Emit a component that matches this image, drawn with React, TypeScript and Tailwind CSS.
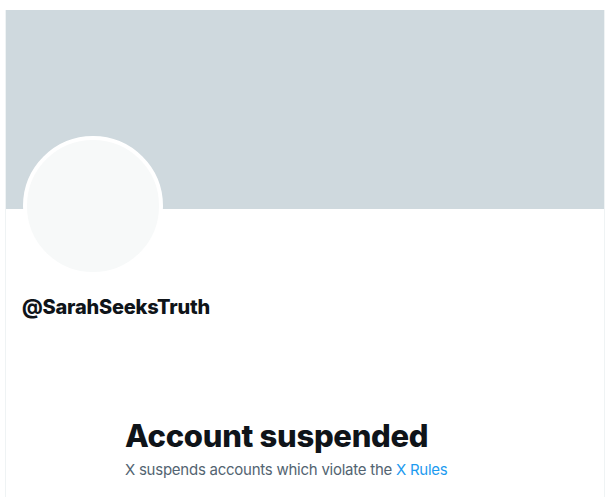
export default function App() {
  return (
    <div
      className="min-h-[497px] bg-white pt-[10px] pl-[5px]"
      style={{ fontFamily: 'Inter, "Noto Sans", "Liberation Sans", sans-serif' }}
    >
      <div className="w-[600px] min-h-[487px] border-x border-[#eff3f4]">
        {/* Banner */}
        <div className="h-[199px] bg-[#cfd9de]" />

        {/* Avatar + handle */}
        <div className="px-4">
          <div className="-mt-[73px] ml-[1px] w-[140px] h-[140px] rounded-full border-4 border-white bg-[#f7f9f9]" />
          <div className="mt-[19px] text-[20px] leading-6 font-extrabold text-[#0f1419] tracking-[-0.2px]">
            @SarahSeeksTruth
          </div>
        </div>

        {/* Empty state */}
        <div className="mx-auto w-[400px] mt-[99px] pl-[20px]">
          <h2 className="text-[31px] leading-9 font-extrabold text-[#0f1419] tracking-[-0.3px]">
            Account suspended
          </h2>
          <p className="mt-[6px] text-[15px] leading-5 text-[#536471] tracking-[-0.25px]">
            X suspends accounts which violate the{' '}
            <span className="text-[#1d9bf0]">X Rules</span>
          </p>
        </div>
      </div>
    </div>
  )
}
